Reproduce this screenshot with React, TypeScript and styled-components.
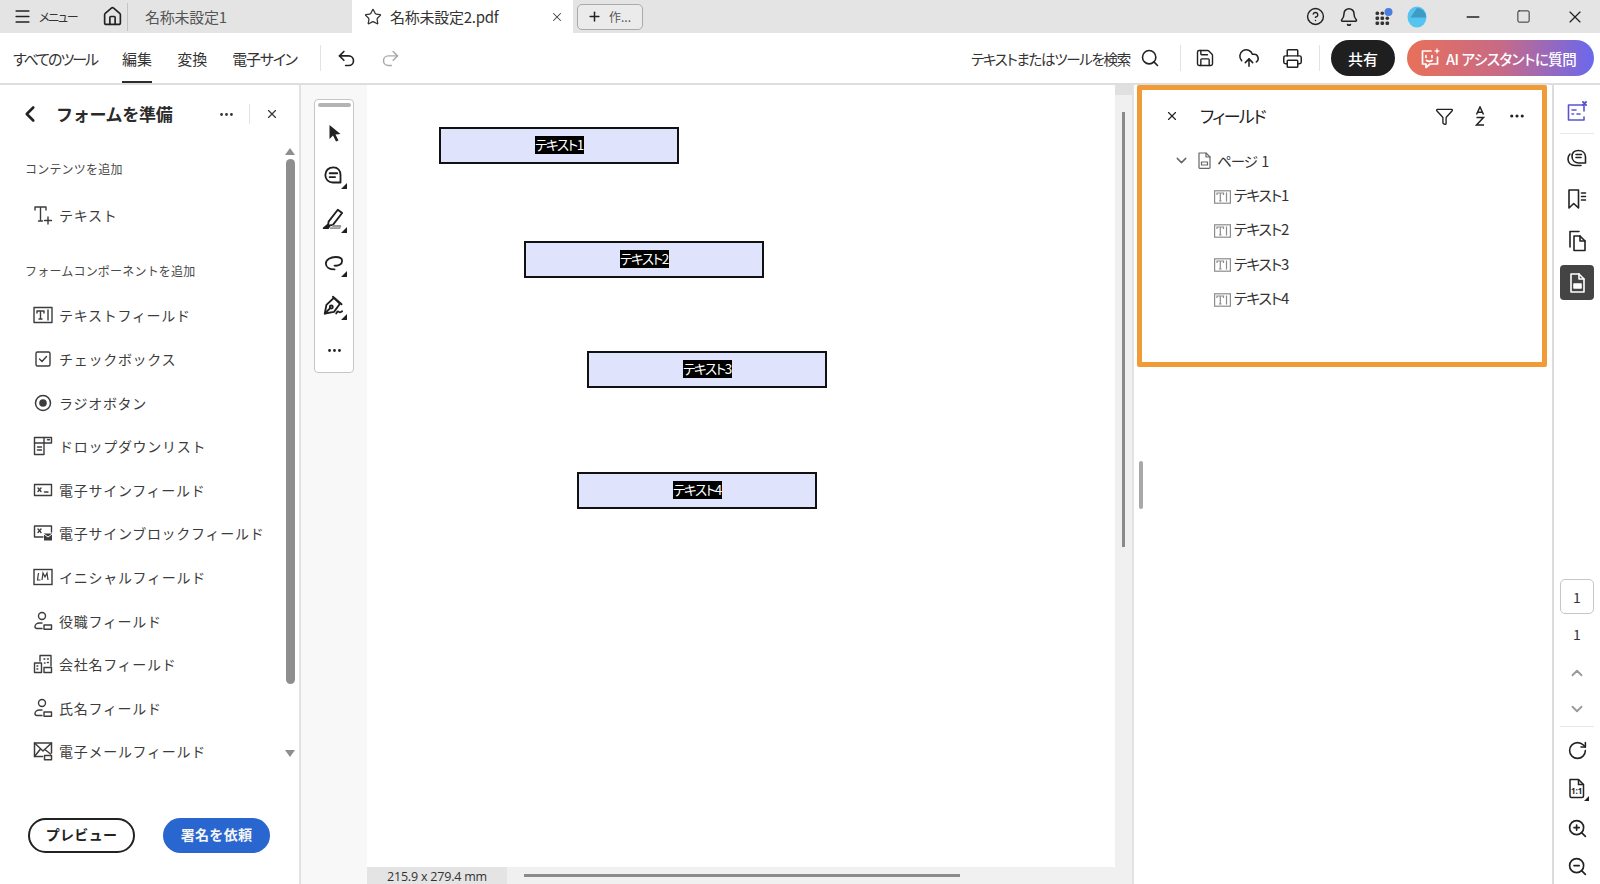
import React from "react";
import styled, { createGlobalStyle } from "styled-components";
import {
  Menu, Home, Star, X, Plus, CircleHelp, Bell, Minus, Square, Undo2, Redo2, Search, Save,
  CloudUpload, Printer, ChevronLeft, Ellipsis, Funnel, ChevronDown, ChevronUp, RotateCw, ZoomIn, ZoomOut,
} from "lucide-react";

const FONT = `"Noto Sans CJK JP", "Noto Sans", sans-serif`;

const Global = createGlobalStyle`
  html, body { margin: 0; padding: 0; background: #fff; }
  body { font-family: ${FONT}; color: #2c2c2c; }
  * { box-sizing: border-box; }
`;

const Root = styled.div`
  width: 1600px; height: 884px; overflow: hidden; display: flex; flex-direction: column; background: #fff;
`;

/* ---------- title bar ---------- */
const TitleBar = styled.div`
  height: 33px; flex: none; background: #e4e4e4; display: flex; align-items: center;
`;
const MenuBtn = styled.div`
  width: 102px; padding-left: 13px; display: flex; align-items: center; gap: 7px;
  font-size: 12px; color: #333; font-feature-settings: "palt"; letter-spacing: -1.3px;
`;
const HomeCell = styled.div`
  width: 26px; height: 28px; display: flex; align-items: center; border-right: 1px solid #c4c4c4; color: #222;
`;
const TabText = styled.span<{ $dark?: boolean }>`
  font-size: 15px; color: ${p => (p.$dark ? "#333" : "#555")}; font-feature-settings: "palt"; letter-spacing: -0.25px;
`;
const InactiveTab = styled.div`
  width: 224px; padding-left: 17px; display: flex; align-items: center;
`;
const ActiveTab = styled.div`
  width: 221px; height: 33px; background: #fff; display: flex; align-items: center; padding: 0 9px 0 12px; gap: 8px;
  color: #333;
`;
const TabClose = styled.span`
  margin-left: auto; display: flex; color: #444;
`;
const NewTabBtn = styled.div`
  margin-left: 4px; width: 66px; height: 26px; border: 1px solid #aaa; border-radius: 5px; display: flex; align-items: center;
  padding-left: 9px; gap: 7px; font-size: 12px; color: #555; background: #ebebeb;
`;
const TitleRight = styled.div`
  margin-left: auto; display: flex; align-items: center;
`;
const UtilCell = styled.div`
  width: 34px; display: flex; justify-content: center; align-items: center; color: #222;
`;
const UtilGroup = styled.div`
  display: flex; margin-right: 13px;
`;
const WinCell = styled.div`
  width: 51px; display: flex; justify-content: center; align-items: center; color: #222;
`;

/* ---------- toolbar ---------- */
const Toolbar = styled.div`
  height: 52px; flex: none; background: #fff; border-bottom: 2px solid #dedede; display: flex; align-items: stretch; padding: 0 6px 0 13px;
`;
const NavTabs = styled.div`
  display: flex; gap: 25px;
`;
const NavTab = styled.div<{ $active?: boolean; $ls?: number }>`
  height: 50px; display: flex; align-items: center; font-size: 15px; color: #333; font-feature-settings: "palt";
  border-bottom: 2px solid ${p => (p.$active ? "#2c2c2c" : "transparent")};
  letter-spacing: ${p => p.$ls ?? 0}px; padding-top: 2px;
`;
const VRule = styled.div<{ $h?: number; $ml?: number; $mr?: number }>`
  width: 1px; height: ${p => p.$h ?? 26}px; background: #e3e3e3; align-self: center;
  margin-left: ${p => p.$ml ?? 0}px; margin-right: ${p => p.$mr ?? 0}px; flex: none;
`;
const ToolIconBtn = styled.div<{ $w?: number; $color?: string }>`
  width: ${p => p.$w ?? 44}px; display: flex; justify-content: center; align-items: center; color: ${p => p.$color ?? "#222"}; flex: none;
`;
const ToolbarRight = styled.div`
  margin-left: auto; display: flex; align-items: center;
`;
const SearchLabel = styled.span`
  font-size: 14.5px; color: #333; font-feature-settings: "palt"; letter-spacing: -1.3px; margin-right: 8px;
`;
const ShareBtn = styled.div`
  width: 64px; height: 36px; border-radius: 18px; background: #1f1f1f; color: #fff; display: flex; align-items: center; justify-content: center;
  font-size: 15px; font-weight: 500; margin-left: 11px;
`;
const AiBtn = styled.div`
  width: 187px; height: 36px; border-radius: 18px; background: linear-gradient(90deg, #e8705a 0%, #c86a86 50%, #6a68ee 100%); color: #fff;
  display: flex; align-items: center; padding-left: 11px; gap: 4px; font-size: 14.5px; font-weight: 500;
  margin-left: 12px; font-feature-settings: "palt"; letter-spacing: -0.45px; white-space: nowrap;
`;

/* ---------- main ---------- */
const Main = styled.div`
  flex: 1; display: flex; min-height: 0;
`;
const LeftPanel = styled.div`
  width: 301px; flex: none; border-right: 2px solid #e2e2e2; display: flex; flex-direction: column;
`;
const PanelHead = styled.div`
  height: 58px; flex: none; display: flex; align-items: center; padding-left: 17px; color: #222;
`;
const PanelTitle = styled.div`
  font-size: 17px; font-weight: 700; color: #2a2a2a; margin-left: 13px; letter-spacing: -0.3px; width: 159px;
  padding-bottom: 2px; white-space: nowrap;
`;
const HeadBtn = styled.div`
  display: flex; width: 23px; justify-content: center; color: #333;
`;
const PanelBody = styled.div`
  flex: 1; display: flex; min-height: 0;
`;
const PanelList = styled.div`
  flex: 1; padding-top: 17px;
`;
const SectionLabel = styled.div<{ $mt?: number; $mb?: number }>`
  margin-left: 25px; height: 18px; line-height: 18px; font-size: 12px; letter-spacing: 0.2px; color: #4a4a4a;
  margin-top: ${p => p.$mt ?? 0}px; margin-bottom: ${p => p.$mb ?? 0}px;
`;
const PanelRow = styled.div`
  height: 43.6px; display: flex; align-items: center; padding-left: 33px; gap: 6px; font-size: 14px; letter-spacing: 0.72px; color: #3c3c3c; white-space: nowrap;
`;
const ScrollCol = styled.div`
  width: 10px; margin: 5px 4px 0 0; height: 614px; display: flex; flex-direction: column; align-items: center; flex: none;
`;
const ArrowUp = styled.div`
  width: 0; height: 0; border-left: 5px solid transparent; border-right: 5px solid transparent; border-bottom: 7px solid #8e8e8e;
`;
const ArrowDown = styled.div`
  width: 0; height: 0; border-left: 5px solid transparent; border-right: 5px solid transparent; border-top: 7px solid #8e8e8e; margin-top: auto; margin-bottom: 5px;
`;
const VThumb = styled.div`
  width: 9px; height: 525px; border-radius: 5px; background: #8e8e8e; margin-top: 4px;
`;
const PanelFoot = styled.div`
  flex: none; display: flex; gap: 28px; padding: 0 0 31px 28px;
`;
const OutlineBtn = styled.div`
  width: 107px; height: 35px; border-radius: 18px; border: 2px solid #222; display: flex; align-items: center; justify-content: center;
  font-size: 14px; font-weight: 700; color: #222; letter-spacing: 0.3px; padding-bottom: 3px;
`;
const PrimaryBtn = styled.div`
  width: 107px; height: 35px; border-radius: 18px; background: #2a66cf; display: flex; align-items: center; justify-content: center;
  font-size: 14px; font-weight: 700; color: #f4f4f4; letter-spacing: 0.3px; padding-bottom: 3px;
`;

/* tool strip */
const ToolStrip = styled.div`
  width: 66px; flex: none; background: #f8f8f8; padding: 14px 0 0 13px;
`;
const ToolBox = styled.div`
  width: 40px; height: 274px; background: #fff; border: 1px solid #c6c6c6; border-radius: 4px; display: flex; flex-direction: column; align-items: center;
`;
const ToolHandle = styled.div`
  width: 33px; height: 4px; background: #b4b4b4; border-radius: 2px; margin: 3px 0 4px; flex: none;
`;
const ToolSlot = styled.div`
  height: 43.6px; display: flex; align-items: center; justify-content: center; flex: none; color: #1f1f1f;
`;

/* doc */
const DocArea = styled.div`
  width: 765px; flex: none; display: flex; flex-direction: column;
`;
const DocTop = styled.div`
  flex: 1; display: flex; min-height: 0;
`;
const Canvas = styled.div`
  flex: 1; position: relative; background: #fff;
`;
const FieldBox = styled.div`
  position: absolute; width: 240px; height: 37px; border: 2px solid #111; background: #dfe3fb; display: flex; align-items: center; justify-content: center;
`;
const FieldLabel = styled.span`
  background: #000; color: #fff; font-size: 13.5px; height: 18px; line-height: 17px; width: 49px; text-align: center; font-feature-settings: "palt"; letter-spacing: -1.35px; white-space: nowrap; margin-bottom: 1px;
`;
const VTrack = styled.div`
  width: 17px; flex: none; background: #f0f0f0; display: flex; flex-direction: column; align-items: center;
`;
const VTrackCap = styled.div`
  width: 17px; height: 10px; background: #e0e0e0;
`;
const VTrackThumb = styled.div`
  width: 3px; height: 435px; background: #8a8a8a; margin-top: 17px;
`;
const DocBottom = styled.div`
  height: 17px; flex: none; display: flex; background: #f0f0f0;
`;
const DimLabel = styled.div`
  width: 140px; background: #e4e4e4; font-size: 12.5px; color: #333; text-align: center; line-height: 19px; letter-spacing: -0.2px; font-family: "Open Sans", sans-serif;
`;
const HThumb = styled.div`
  width: 436px; height: 3px; background: #8a8a8a; margin: 7px 0 0 17px;
`;

/* right panel */
const RightPanel = styled.div`
  width: 420px; flex: none; border-left: 2px solid #e2e2e2; position: relative; padding: 0 0 0 3px; background: #fff;
`;
const Resizer = styled.div`
  position: absolute; left: 5px; top: 376px; width: 4px; height: 48px; background: #a8a8a8; border-radius: 2px;
`;
const FieldsCard = styled.div`
  width: 410px; height: 282px; border: 5px solid #f09b35; border-radius: 2px; background: #fff;
`;
const CardHead = styled.div`
  height: 52px; display: flex; align-items: center; padding-left: 23px; color: #222;
`;
const CardTitle = styled.div`
  font-size: 17px; color: #222; margin-left: 21px; font-feature-settings: "palt"; letter-spacing: -1.6px; padding-bottom: 2px;
`;
const CardTools = styled.div`
  margin-left: auto; display: flex; align-items: center; margin-right: 6px;
`;
const CardTool = styled.div<{ $w?: number }>`
  width: ${p => p.$w ?? 36}px; display: flex; justify-content: center; color: #222;
`;
const TreeHead = styled.div`
  height: 34.4px; display: flex; align-items: center; padding-left: 31px; color: #666; margin-top: 1px;
`;
const TreeGap = styled.span`
  width: 7px; flex: none;
`;
const TreeHeadText = styled.span`
  font-size: 14.5px; color: #333; margin-left: 5px; font-feature-settings: "palt"; letter-spacing: -1px; word-spacing: 2px;
`;
const TreeRow = styled.div`
  height: 34.4px; display: flex; align-items: center; padding-left: 72px; gap: 3px; font-size: 15px; color: #333; font-feature-settings: "palt"; letter-spacing: -1.35px;
`;

/* rail */
const Rail = styled.div`
  flex: 1; background: #fff; border-left: 2px solid #dcdcdc; display: flex; flex-direction: column; align-items: center; padding-top: 6px;
`;
const RailSlot = styled.div<{ $active?: boolean; $h?: number; $color?: string }>`
  width: 34px; height: ${p => p.$h ?? 36}px; flex: none; display: flex; align-items: center; justify-content: center;
  border-radius: 4px; background: ${p => (p.$active ? "#444" : "transparent")}; color: ${p => (p.$active ? "#fff" : p.$color ?? "#222")};
`;
const RailRule = styled.div<{ $mt?: number; $mb?: number }>`
  width: 34px; height: 1px; background: #e8e8e8; margin-top: ${p => p.$mt ?? 0}px; margin-bottom: ${p => p.$mb ?? 0}px; flex: none;
`;
const RailGap = styled.div<{ $h: number }>`
  height: ${p => p.$h}px; flex: none;
`;
const PageBox = styled.div`
  width: 34px; height: 35px; border: 1px solid #c6c6c6; border-radius: 5px; display: flex; align-items: center; justify-content: center; font-size: 14px; color: #333; flex: none;
`;
const PageText = styled.div`
  height: 40px; display: flex; align-items: center; font-size: 14px; color: #333; flex: none;
`;

/* ---------- drawn icons ---------- */
const Svg = ({ s = 24, w, h, children, sw = 1.5, vb }: { s?: number; w?: number; h?: number; children: React.ReactNode; sw?: number; vb?: string }) => (
  <svg width={w ?? s} height={h ?? s} viewBox={vb ?? "0 0 24 24"} fill="none" stroke="currentColor" strokeWidth={sw} strokeLinecap="round" strokeLinejoin="round" style={{ flex: "none", display: "block" }}>
    {children}
  </svg>
);
const Corner = () => <path d="M24 18.500v5.500h-5.500z" fill="currentColor" stroke="none" />;

const ICONS: Record<string, React.ReactNode> = {
  addText: (
    <Svg w={20} h={20} vb="0 0 20 20" sw={1.4}>
      <path d="M2 5V2h11v3M7.500 2v14M5.500 16h4" /><path d="M15 12v7M11.500 15.500h7" />
    </Svg>
  ),
  textField: (
    <Svg w={20} h={18} vb="0 0 20 18" sw={1.4}>
      <rect x="1" y="1.500" width="18" height="15" />
      <path d="M4 7V5h7v2M7.500 5v8M6 13h3" /><path d="M15 4v10" />
    </Svg>
  ),
  check: (
    <Svg w={20} h={18} vb="0 0 20 18" sw={1.400}>
      <rect x="3" y="2" width="14" height="14" rx="1.500" /><path d="M6.500 9l2.500 2.500 4.500-5" />
    </Svg>
  ),
  radio: (
    <Svg w={20} h={18} vb="0 0 20 18" sw={1.500}>
      <circle cx="10" cy="9" r="7.500" /><circle cx="10" cy="9" r="3.800" fill="currentColor" stroke="none" />
    </Svg>
  ),
  drop: (
    <Svg w={20} h={20} vb="0 0 20 20" sw={1.400}>
      <path d="M1.500 7h9.500V1.500h7.500V7H11v11.500H1.500V7z" /><path d="M1.500 7V1.500H11" /><path d="M4.500 11h4M4.500 14h4" /><path d="M14.500 3.800h2" />
    </Svg>
  ),
  sign: (
    <Svg w={20} h={14} vb="0 0 20 14" sw={1.400}>
      <rect x="1.500" y="1.500" width="17" height="11" /><path d="M5 5l3 3.500M8 5L5 8.500M11.500 9H15" />
    </Svg>
  ),
  signBlock: (
    <Svg w={20} h={18} vb="0 0 20 18" sw={1.400}>
      <path d="M10 13H1.500V2h17v6" /><path d="M5 5l3 3.500M8 5L5 8.500" /><rect x="11" y="9.500" width="8" height="7" fill="currentColor" stroke="none" /><path d="M11.500 10.500l3.500 2.500 3.500-2.500" stroke="#fff" strokeWidth="1" />
    </Svg>
  ),
  initial: (
    <svg width="20" height="18" viewBox="0 0 20 18" fill="none" stroke="currentColor" strokeWidth="1.400" style={{ flex: "none", display: "block" }}>
      <rect x="1" y="1.500" width="18" height="15" />
      <path d="M5.500 5l-1 7h3M9 12l1-7 2 4 2-4 1 7" strokeWidth="1.200" />
    </svg>
  ),
  person: (
    <Svg w={20} h={20} vb="0 0 20 20" sw={1.400}>
      <circle cx="9" cy="5" r="3.500" /><path d="M9 12H6.500c-2.500 0-4.500 1.500-4.500 3.500s1.300 2 2 2h5" /><rect x="11" y="14" width="7.500" height="4.200" />
    </Svg>
  ),
  company: (
    <Svg w={20} h={20} vb="0 0 20 20" sw={1.400}>
      <path d="M7 7V1.500h11V12" /><path d="M1.500 18.500V9h7v9.500z" /><path d="M4 12h.8M4 15h.8M11 5h.8M14.500 5h.8M14.500 8.500h.8M11.500 9h.5" strokeWidth="1.500" /><rect x="11" y="13.500" width="7.500" height="5" />
    </Svg>
  ),
  mail: (
    <Svg w={20} h={20} vb="0 0 20 20" sw={1.500}>
      <path d="M9.500 15.500H1.500V2h17v10" /><path d="M1.500 2l8.500 8 8.500-8M1.500 15.500l6-7.500" /><path d="M12.500 9l5 4" /><rect x="11.500" y="14.500" width="7" height="4.200" />
    </Svg>
  ),
  arrow: (
    <svg width="20" height="20" viewBox="0 0 20 20" style={{ display: "block" }}><path d="M5.500 2l11 9-5 .5 3 6-2.500 1-3-6-3.500 3.500z" fill="#222" /></svg>
  ),
  comment: (
    <Svg w={26} h={26} sw={1.700}>
      <path d="M11.500 4c-4.500 0-7.500 3-7.500 7s3 7 7 7h7v-7c0-4-2.500-7-6.500-7z" /><path d="M8 9.500h7M8 13h5" /><Corner />
    </Svg>
  ),
  highlight: (
    <Svg w={26} h={26} sw={1.700}>
      <path d="M7 13.500L15.500 2.500l4 3-8.500 11-4.500.8z" /><path d="M2.500 19.500l3.500-3 1.500 1.500-1 1.500z" fill="currentColor" /><path d="M9 19.500h8l1-2h-7" stroke="#999" /><Corner />
    </Svg>
  ),
  lasso: (
    <Svg w={26} h={26} sw={1.700}>
      <path d="M12.500 13.500c3.500.5 7-1 7-4.500 0-2.500-2.500-3.500-6-3.500-4.500 0-9 2.500-9 6 0 3.500 3.500 5.500 8 5.500" /><Corner />
    </Svg>
  ),
  pen: (
    <Svg w={26} h={26} sw={1.700}>
      <path d="M3.500 18l1.500-8 7-6.500 5.500 5.500-5.500 7.500z" /><path d="M3.500 18l5-5" /><circle cx="9.500" cy="12" r="1.400" /><path d="M11 2.500l8 7M14 18c1-1.500 1.500-2.500 2.500-1.500s1.500.5 3-.5" /><Corner />
    </Svg>
  ),
  panelForm: (
    <Svg w={24} h={24} sw={1.600}>
      <path d="M19 11V5H3.500v15H19v-3" /><path d="M7 10h4M7 14h1.500M12 14h3" /><path d="M18 2l3 3M21 2l-3 3" stroke="currentColor" strokeWidth="2" />
    </Svg>
  ),
  comments: (
    <Svg w={24} h={24} sw={1.600}>
      <path d="M13.500 4.500c4 0 7 2.500 7 6.500v6h-6.500c-4 0-7-2.500-7-6.500s2.500-6 6.500-6z" /><path d="M11 8.500h5.500M11 11.500h5" /><path d="M5 8c-1.500 1.500-2 3-2 5 0 4 3 6.500 7 6.500h6" />
    </Svg>
  ),
  bookmark: (
    <Svg w={24} h={24} sw={1.600}>
      <path d="M4 3h9.500v18l-4.800-4.500L4 21z" /><path d="M16.500 6h4M16.500 9.500h4M16.500 13h4" />
    </Svg>
  ),
  pages: (
    <Svg w={24} h={24} sw={1.600}>
      <path d="M9 7h6l5 5v9.500H9z" /><path d="M15 7v5h5" /><path d="M5 18V2.500h9" />
    </Svg>
  ),
  formDoc: (
    <Svg w={24} h={24} sw={1.600}>
      <path d="M6 3h8l5 5v13H6z" /><path d="M14 3v5h5" /><rect x="9" y="13" width="7" height="4" fill="currentColor" />
    </Svg>
  ),
  actual: (
    <svg width="24" height="24" viewBox="0 0 24 24" fill="none" stroke="currentColor" strokeWidth="1.500" style={{ display: "block" }}>
      <path d="M5 2.500h8.500l5 5V19a1.500 1.500 0 0 1-1.500 1.500H6.500A1.500 1.500 0 0 1 5 19z" strokeLinejoin="round" /><path d="M13.500 2.500v5h5" />
      <text x="11.700" y="16.800" fontSize="8" fontWeight="700" fill="currentColor" stroke="none" textAnchor="middle" fontFamily="Open Sans, sans-serif">1:1</text>
      <path d="M24 19v5h-5z" fill="currentColor" stroke="none" />
    </svg>
  ),
  treeDoc: (
    <Svg w={15} h={17} vb="0 0 15 17" sw={1.200}>
      <path d="M2 1h7l4 4v10.500a.8.8 0 0 1-.8.8H2.800a.8.8 0 0 1-.8-.8z" /><path d="M9 1v4h4" /><rect x="4.500" y="10" width="6" height="3" />
    </Svg>
  ),
  treeField: (
    <svg width="17" height="14" viewBox="0 0 17 14" fill="none" stroke="#8c8c8c" strokeWidth="1.200" style={{ display: "block", flex: "none", marginTop: 4 }}>
      <rect x=".6" y=".8" width="15.800" height="12.400" />
      <path d="M3 5V3h6.500v2M6.300 3v8M5 11h2.600M12.500 2.500v9" />
    </svg>
  ),
  sortAz: (
    <svg width="10" height="20" viewBox="0 0 10 20" fill="none" stroke="#222" strokeWidth="1.500" style={{ display: "block" }}>
      <path d="M1.500 8.500L5 1l3.500 7.500M2.600 6.200h4.800" /><path d="M1.500 11.500h7l-7 7.500h7.500" />
    </svg>
  ),
  sparkChat: (
    <Svg w={24} h={24} sw={1.700}>
      <path d="M13 5H4.500v13h3.500v3.500l4-3.500h7.500v-7" /><path d="M8 9.500v2M14 9.500v2M8.500 14.500c2 1 4 1 5.500 0" /><path d="M19 1.500l.8 2.700 2.700.8-2.700.8-.8 2.700-.8-2.700-2.700-.8 2.700-.8z" fill="#fff" stroke="none" />
    </Svg>
  ),
  apps: (
    <svg width="20" height="20" viewBox="0 0 20 20" style={{ display: "block" }}>
      <g fill="#333">
        <rect x="2.500" y="4.500" width="3.600" height="3.600" rx="1.500" /><rect x="7.500" y="4.500" width="3.600" height="3.600" rx="1.800" />
        <rect x="2.500" y="9.500" width="3.600" height="3.600" rx="1.300" /><rect x="7.500" y="9.500" width="3.600" height="3.600" rx="1.300" /><rect x="12.500" y="9.500" width="3.600" height="3.600" rx="1.800" />
        <rect x="2.500" y="14.500" width="3.600" height="3.600" rx="1.300" /><rect x="7.500" y="14.500" width="3.600" height="3.600" rx="1.300" /><rect x="12.500" y="14.500" width="3.600" height="3.600" rx="1.300" />
      </g>
      <circle cx="15.500" cy="5" r="4" fill="#4a7fe0" />
    </svg>
  ),
  avatar: (
    <svg width="20" height="22" viewBox="0 0 20 22" style={{ display: "block" }}>
      <ellipse cx="10" cy="11" rx="9.500" ry="10.500" fill="#55c4f1" /><path d="M10 2A9 9 0 0 1 19 11.500H3.500z" fill="#3d9bc4" />
    </svg>
  ),
};

const Ic = ({ name }: { name: string }) => <>{ICONS[name]}</>;

const formRows: [string, string][] = [
  ["textField", "テキストフィールド"],
  ["check", "チェックボックス"],
  ["radio", "ラジオボタン"],
  ["drop", "ドロップダウンリスト"],
  ["sign", "電子サインフィールド"],
  ["signBlock", "電子サインブロックフィールド"],
  ["initial", "イニシャルフィールド"],
  ["person", "役職フィールド"],
  ["company", "会社名フィールド"],
  ["person", "氏名フィールド"],
  ["mail", "電子メールフィールド"],
];

const canvasFields = [
  { x: 72, y: 42, t: "テキスト1" },
  { x: 157, y: 156, t: "テキスト2" },
  { x: 220, y: 266, t: "テキスト3" },
  { x: 210, y: 387, t: "テキスト4" },
];

export default function App() {
  return (
    <Root>
      <Global />
      <TitleBar>
        <MenuBtn><Menu size={19} strokeWidth={2} color="#222" /><span>メニュー</span></MenuBtn>
        <HomeCell><Home size={21} strokeWidth={1.9} /></HomeCell>
        <InactiveTab><TabText>名称未設定1</TabText></InactiveTab>
        <ActiveTab>
          <Star size={18} strokeWidth={1.7} />
          <TabText $dark>名称未設定2.pdf</TabText>
          <TabClose><X size={14} strokeWidth={1.8} /></TabClose>
        </ActiveTab>
        <NewTabBtn><Plus size={15} strokeWidth={2.4} color="#222" /><span>作...</span></NewTabBtn>
        <TitleRight>
          <UtilGroup>
            <UtilCell><CircleHelp size={19} strokeWidth={1.8} /></UtilCell>
            <UtilCell><Bell size={20} strokeWidth={1.8} /></UtilCell>
            <UtilCell><Ic name="apps" /></UtilCell>
            <UtilCell><Ic name="avatar" /></UtilCell>
          </UtilGroup>
          <WinCell><Minus size={20} strokeWidth={1.6} /></WinCell>
          <WinCell><Square size={15} strokeWidth={1.5} /></WinCell>
          <WinCell><X size={20} strokeWidth={1.4} /></WinCell>
        </TitleRight>
      </TitleBar>

      <Toolbar>
        <NavTabs>
          <NavTab $ls={-2}>すべてのツール</NavTab>
          <NavTab $active>編集</NavTab>
          <NavTab>変換</NavTab>
          <NavTab $ls={-1.2}>電子サイン</NavTab>
        </NavTabs>
        <VRule $ml={23} $mr={5} />
        <ToolIconBtn $w={42}><Undo2 size={21} strokeWidth={1.9} /></ToolIconBtn>
        <ToolIconBtn $w={46} $color="#aaa"><Redo2 size={21} strokeWidth={1.7} /></ToolIconBtn>
        <ToolbarRight>
          <SearchLabel>テキストまたはツールを検索</SearchLabel>
          <ToolIconBtn $w={24}><Search size={20} strokeWidth={1.9} /></ToolIconBtn>
          <VRule $ml={18} $mr={2} />
          <ToolIconBtn><Save size={20} strokeWidth={1.7} /></ToolIconBtn>
          <ToolIconBtn><CloudUpload size={22} strokeWidth={1.7} /></ToolIconBtn>
          <ToolIconBtn $w={43}><Printer size={21} strokeWidth={1.7} /></ToolIconBtn>
          <VRule $ml={5} />
          <ShareBtn>共有</ShareBtn>
          <AiBtn><Ic name="sparkChat" /><span>AI アシスタントに質問</span></AiBtn>
        </ToolbarRight>
      </Toolbar>

      <Main>
        <LeftPanel>
          <PanelHead>
            <ChevronLeft size={26} strokeWidth={2.4} />
            <PanelTitle>フォームを準備</PanelTitle>
            <HeadBtn><Ellipsis size={17} strokeWidth={2} /></HeadBtn>
            <VRule $h={20} $ml={11} $mr={10} />
            <HeadBtn><X size={14} strokeWidth={2} /></HeadBtn>
          </PanelHead>
          <PanelBody>
            <PanelList>
              <SectionLabel $mb={15}>コンテンツを追加</SectionLabel>
              <PanelRow><Ic name="addText" /><span>テキスト</span></PanelRow>
              <SectionLabel $mt={25} $mb={14}>フォームコンポーネントを追加</SectionLabel>
              {formRows.map(([icon, label], i) => (
                <PanelRow key={i}><Ic name={icon} /><span>{label}</span></PanelRow>
              ))}
            </PanelList>
            <ScrollCol><ArrowUp /><VThumb /><ArrowDown /></ScrollCol>
          </PanelBody>
          <PanelFoot>
            <OutlineBtn>プレビュー</OutlineBtn>
            <PrimaryBtn>署名を依頼</PrimaryBtn>
          </PanelFoot>
        </LeftPanel>

        <ToolStrip>
          <ToolBox>
            <ToolHandle />
            <ToolSlot><Ic name="arrow" /></ToolSlot>
            <ToolSlot><Ic name="comment" /></ToolSlot>
            <ToolSlot><Ic name="highlight" /></ToolSlot>
            <ToolSlot><Ic name="lasso" /></ToolSlot>
            <ToolSlot><Ic name="pen" /></ToolSlot>
            <ToolSlot><Ellipsis size={17} strokeWidth={2} /></ToolSlot>
          </ToolBox>
        </ToolStrip>

        <DocArea>
          <DocTop>
            <Canvas>
              {canvasFields.map(f => (
                <FieldBox key={f.t} style={{ left: f.x, top: f.y }}>
                  <FieldLabel>{f.t}</FieldLabel>
                </FieldBox>
              ))}
            </Canvas>
            <VTrack><VTrackCap /><VTrackThumb /></VTrack>
          </DocTop>
          <DocBottom>
            <DimLabel>215.9 x 279.4 mm</DimLabel>
            <HThumb />
          </DocBottom>
        </DocArea>

        <RightPanel>
          <Resizer />
          <FieldsCard>
            <CardHead>
              <X size={14} strokeWidth={2} />
              <CardTitle>フィールド</CardTitle>
              <CardTools>
                <CardTool><Funnel size={19} strokeWidth={1.7} /></CardTool>
                <CardTool><Ic name="sortAz" /></CardTool>
                <CardTool $w={38}><Ellipsis size={18} strokeWidth={2.2} /></CardTool>
              </CardTools>
            </CardHead>
            <TreeHead>
              <ChevronDown size={17} strokeWidth={2} />
              <TreeGap />
              <Ic name="treeDoc" />
              <TreeHeadText>ページ 1</TreeHeadText>
            </TreeHead>
            {[1, 2, 3, 4].map(n => (
              <TreeRow key={n}><Ic name="treeField" /><span>テキスト{n}</span></TreeRow>
            ))}
          </FieldsCard>
        </RightPanel>

        <Rail>
          <RailSlot $color="#5a55cf" $h={42}><Ic name="panelForm" /></RailSlot>
          <RailRule $mb={4} />
          <RailSlot $h={40}><Ic name="comments" /></RailSlot>
          <RailSlot $h={42}><Ic name="bookmark" /></RailSlot>
          <RailSlot $h={42}><Ic name="pages" /></RailSlot>
          <RailGap $h={3} />
          <RailSlot $active $h={35}><Ic name="formDoc" /></RailSlot>
          <RailGap $h={279} />
          <PageBox>1</PageBox>
          <PageText>1</PageText>
          <RailSlot $h={37} $color="#999"><ChevronUp size={18} strokeWidth={2.4} /></RailSlot>
          <RailSlot $h={35} $color="#999"><ChevronDown size={18} strokeWidth={2.4} /></RailSlot>
          <RailRule $mb={4} />
          <RailSlot $h={38}><RotateCw size={21} strokeWidth={1.8} /></RailSlot>
          <RailSlot $h={40}><Ic name="actual" /></RailSlot>
          <RailSlot $h={38}><ZoomIn size={21} strokeWidth={1.9} /></RailSlot>
          <RailSlot $h={38}><ZoomOut size={21} strokeWidth={1.9} /></RailSlot>
        </Rail>
      </Main>
    </Root>
  );
}
